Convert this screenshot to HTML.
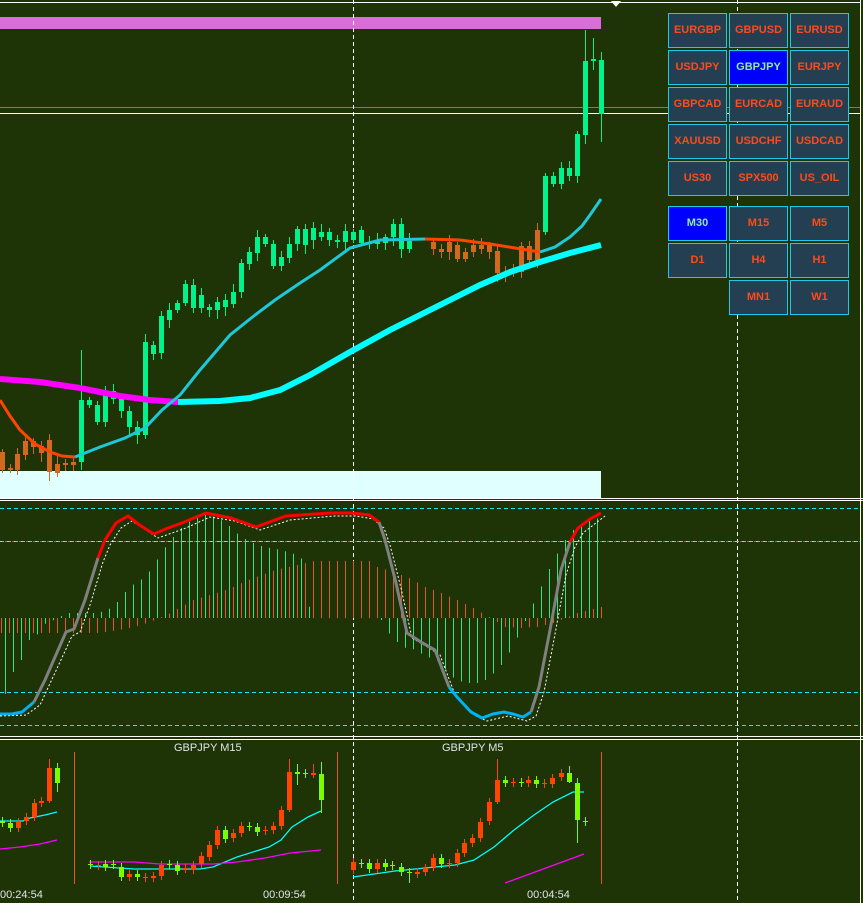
<!DOCTYPE html>
<html><head><meta charset="utf-8">
<style>
html,body{margin:0;padding:0;background:#1e3306;}
body{width:863px;height:903px;overflow:hidden;position:relative;font-family:"Liberation Sans",sans-serif;}
svg{position:absolute;left:0;top:0;}
.btn{position:absolute;width:57px;height:33px;background:#243f52;border:1px solid #1ec8f0;color:#ff4a1a;font-weight:bold;font-size:11px;line-height:33px;text-align:center;}
.sel{background:#0000ff;color:#90ee90;}
.t{position:absolute;color:#dfe6e6;font-size:11px;}
</style></head><body>
<svg id="s" width="863" height="903" xmlns="http://www.w3.org/2000/svg">
<rect width="863" height="903" fill="#1e3306"/>
<line x1="0" y1="2.5" x2="860" y2="2.5" stroke="#fff"/>
<path d="M611 1 L621 1 L616 7 Z" fill="#fff"/>
<rect x="0" y="17" width="601" height="12" fill="#d86fd6"/>
<rect x="0" y="471" width="601" height="27" fill="#e0ffff"/>
<line x1="0" y1="107.5" x2="860" y2="107.5" stroke="#e05a10"/>
<line x1="0" y1="113.5" x2="860" y2="113.5" stroke="#fff"/>
<line x1="353.5" y1="0" x2="353.5" y2="903" stroke="#fff" stroke-dasharray="4,3"/>
<line x1="737.5" y1="0" x2="737.5" y2="903" stroke="#fff" stroke-dasharray="4,3"/>
<line x1="860.5" y1="0" x2="860.5" y2="903" stroke="#fff"/>
<line x1="0" y1="498.5" x2="863" y2="498.5" stroke="#fff"/>
<line x1="0" y1="500.5" x2="863" y2="500.5" stroke="#fff"/>
<line x1="0" y1="736.5" x2="863" y2="736.5" stroke="#fff"/>
<line x1="0" y1="739.5" x2="863" y2="739.5" stroke="#fff"/>
<g stroke="#1ee6f0" stroke-dasharray="4,3">
<line x1="0" y1="508.5" x2="860" y2="508.5"/><line x1="0" y1="541.5" x2="860" y2="541.5"/>
<line x1="0" y1="692.5" x2="860" y2="692.5"/><line x1="0" y1="725.5" x2="860" y2="725.5"/>
</g>
<line x1="0" y1="541.5" x2="860" y2="541.5" stroke="#fff" stroke-dasharray="4,3" stroke-dashoffset="2" opacity="0.35"/>
<g id="hist"></g>
<g id="cand" shape-rendering="crispEdges"></g>
<polyline fill="none" stroke="#ff4500" stroke-width="3" points="0,400 10,416 20,430 35,444 50,452 62,456 75,457"/>
<polyline fill="none" stroke="#ff00ff" stroke-width="6" points="0,379 40,382 80,388 120,396 150,400 178,402"/>
<polyline fill="none" stroke="#00ffff" stroke-width="6" points="178,402 220,401 250,398 280,390 310,375 350,352 390,330 420,315 450,300 480,285 510,272 540,262 570,253 601,245"/>
<polyline fill="none" stroke="#1ec8d8" stroke-width="3" points="75,457 100,447 125,438 145,428 162,410 180,395 200,370 230,335 255,315 275,300 300,283 320,270 350,248 380,240 425,239"/>
<polyline fill="none" stroke="#ff4500" stroke-width="3" points="425,239 460,240 490,244 515,248 540,252"/>
<polyline fill="none" stroke="#1ec8d8" stroke-width="3" points="540,252 555,247 570,237 582,226 590,215 601,199"/>
<polyline fill="none" stroke="#fff" stroke-width="1" stroke-dasharray="2,2" points="0,716 26,715 40,705 60,662 72,636 80,632 90,605 103,562 110,545 121,528 132,521 158,538 186,528 210,517 235,521 260,530 290,520 334,516 356,516 373,519 384,528 390,545 401,588 412,638 426,646 440,655 454,692 462,702 476,716 487,721 508,716 527,721 536,716 544,692 555,634 566,575 575,547 583,533 605,516"/>
<polyline fill="none" stroke="#00b0f0" stroke-width="3" points="0,714 12,714 22,712 34,702"/>
<polyline fill="none" stroke="#808080" stroke-width="3" points="34,702 45,680 55,657 66,632 74,629 85,600 98,558"/>
<polyline fill="none" stroke="#ff0000" stroke-width="3" points="98,558 105,540 116,523 128,516 141,526 154,534 168,528 182,523 206,513 231,518 256,527 286,516 330,513 352,513 369,515 379,522"/>
<polyline fill="none" stroke="#808080" stroke-width="3" points="379,522 385,540 396,583 407,633 421,642 435,650 449,687"/>
<polyline fill="none" stroke="#00b0f0" stroke-width="3" points="449,687 457,697 471,712 482,718 493,714 504,712 513,714 523,717 531,712"/>
<polyline fill="none" stroke="#808080" stroke-width="3" points="531,712 539,687 550,630 561,570 570,542"/>
<polyline fill="none" stroke="#ff0000" stroke-width="3" points="570,542 578,528 590,519 601,513"/>
<g stroke="#e05a10"><line x1="74.5" y1="752" x2="74.5" y2="884"/><line x1="337.5" y1="752" x2="337.5" y2="884"/><line x1="601.5" y1="752" x2="601.5" y2="884"/></g>
<g fill="none" stroke-width="1.3">
<polyline stroke="#00ffff" points="0,821 23,821 30,818 45,815 57,812"/>
<polyline stroke="#ff00ff" points="0,849 20,847 40,844 57,840"/>
<polyline stroke="#00ffff" points="90,866 134,869 200,869 213,867 237,857 269,847 281,840 292,827 308,817 321,811"/>
<polyline stroke="#ff00ff" points="89,862 134,862 160,864 213,864 237,862 265,858 290,853 321,850"/>
<polyline stroke="#00ffff" points="353,877 395,871 435,867 455,865 474,860 494,847 514,830 534,815 553,802 573,792 584,792"/>
<polyline stroke="#ff00ff" points="505,883 584,854"/>
</g>
<g id="mini" shape-rendering="crispEdges"></g>
</svg>
<div class="t" style="left:174px;top:742px;">GBPJPY M15</div>
<div class="t" style="left:442px;top:742px;">GBPJPY M5</div>
<div class="t" style="left:0px;top:889px;">00:24:54</div>
<div class="t" style="left:263px;top:889px;">00:09:54</div>
<div class="t" style="left:527px;top:889px;">00:04:54</div>

<div class="btn" style="left:668px;top:13px">EURGBP</div>
<div class="btn" style="left:729px;top:13px">GBPUSD</div>
<div class="btn" style="left:790px;top:13px">EURUSD</div>
<div class="btn" style="left:668px;top:50px">USDJPY</div>
<div class="btn sel" style="left:729px;top:50px">GBPJPY</div>
<div class="btn" style="left:790px;top:50px">EURJPY</div>
<div class="btn" style="left:668px;top:87px">GBPCAD</div>
<div class="btn" style="left:729px;top:87px">EURCAD</div>
<div class="btn" style="left:790px;top:87px">EURAUD</div>
<div class="btn" style="left:668px;top:124px">XAUUSD</div>
<div class="btn" style="left:729px;top:124px">USDCHF</div>
<div class="btn" style="left:790px;top:124px">USDCAD</div>
<div class="btn" style="left:668px;top:161px">US30</div>
<div class="btn" style="left:729px;top:161px">SPX500</div>
<div class="btn" style="left:790px;top:161px">US_OIL</div>
<div class="btn sel" style="left:668px;top:206px">M30</div>
<div class="btn" style="left:729px;top:206px">M15</div>
<div class="btn" style="left:790px;top:206px">M5</div>
<div class="btn" style="left:668px;top:243px">D1</div>
<div class="btn" style="left:729px;top:243px">H4</div>
<div class="btn" style="left:790px;top:243px">H1</div>
<div class="btn" style="left:729px;top:280px">MN1</div>
<div class="btn" style="left:790px;top:280px">W1</div>

<script>
var NS="http://www.w3.org/2000/svg";
function el(p,t,a){var e=document.createElementNS(NS,t);for(var k in a)e.setAttribute(k,a[k]);p.appendChild(e);return e;}
function interp(keys,x){if(x<=keys[0][0])return keys[0][1];for(var i=1;i<keys.length;i++){if(x<=keys[i][0]){var a=keys[i-1],b=keys[i];return a[1]+(b[1]-a[1])*(x-a[0])/(b[0]-a[0]);}}return keys[keys.length-1][1];}
var h=document.getElementById('hist');
var og=[[2,633],[58,633],[100,633],[130,628],[150,622],[170,613],[193,600],[226,590],[248,580],[275,570],[297,565],[314,561],[369,561],[377,567],[393,572],[409,578],[425,587],[441,593],[457,600],[473,608],[489,617],[505,627],[521,628],[537,627],[553,623],[577,613],[601,607]];
var gg=[[2,707],[10,672],[18,672],[26,640],[34,640],[42,625],[58,618],[66,613],[98,613],[113,607],[121,597],[129,587],[145,577],[153,566],[161,553],[170,540],[177,533],[185,523],[194,520],[201,515],[209,515],[217,518],[226,523],[233,530],[241,537],[249,541],[257,545],[265,547],[281,550],[297,555],[305,562],[310,618],[377,618],[381,620],[385,630],[393,637],[401,647],[417,650],[425,657],[433,658],[441,663],[449,675],[457,680],[465,683],[481,683],[489,677],[497,670],[505,660],[513,645],[521,630],[529,612],[537,595],[545,578],[553,560],[561,547],[569,533],[577,527],[585,523],[593,518],[601,519]];
for(var x=1;x<=601;x+=8){var y=interp(og,x);el(h,'line',{x1:x+.5,x2:x+.5,y1:618,y2:y,stroke:'#e05a10'});}
for(var x=5;x<=601;x+=8){var y=interp(gg,x);if(Math.abs(y-618)>1)el(h,'line',{x1:x+.5,x2:x+.5,y1:618,y2:y,stroke:'#2ae88a'});}
// main candles: x, bodyTop, bodyBot, bull
var C=[[2,452,470,0],[10,468,470,0],[17,454,470,0],[25,441,455,0],[33,441,447,0],[41,446,453,0],[49,440,472,0],[57,464,473,0],[65,463,465,0],[73,462,465,0],
[81,400,462,1],[89,400,405,1],[97,405,422,1],[105,392,422,1],[113,391,399,1],[121,399,411,1],[129,411,427,1],[137,427,435,1],[145,342,435,1],[153,345,354,1],[161,316,353,1],[169,310,320,1],[177,303,310,1],[185,284,303,1],[193,285,308,1],[201,295,308,1],[209,307,310,1],[217,302,310,1],[225,300,307,1],[233,292,304,1],[241,263,292,1],[249,252,264,1],[257,237,253,1],[265,237,244,1],[273,244,266,1],[281,257,266,1],[289,244,258,1],[297,229,244,1],[305,229,245,1],[313,228,240,1],[321,232,237,1],[329,232,240,1],[337,240,242,1],[345,231,242,1],[353,232,240,1],[361,230,243,1],[369,242,244,1],[377,240,244,1],[385,237,243,1],[393,224,237,1],[401,224,249,1],[409,241,249,1],
[433,242,249,0],[441,249,252,0],[449,242,252,0],[457,245,259,0],[465,252,259,0],[473,245,252,0],[481,245,249,0],[489,245,252,0],[497,251,273,0],[505,272,273,0],[513,272,273,0],[521,246,272,0],[529,246,260,0],[537,230,260,0],
[545,176,232,1],[553,176,184,1],[561,168,184,1],[569,168,176,1],[577,134,176,1],[585,61,135,1],[593,59,61,1],[601,60,114,1]];
var cg=document.getElementById('cand');
C.forEach(function(c,i){var col=c[3]?'#00f28c':'#d2691e';var w=(i*7)%11;var t=c[1]-3-w%6,b=c[2]+3+(w*3)%7;if(c[0]==81)t=350;if(c[0]==585)t=30;if(c[0]==593){t=38;b=70;}if(c[0]==601)b=142;
el(cg,'line',{x1:c[0]+.5,x2:c[0]+.5,y1:t,y2:b,stroke:col});var hh=Math.max(c[2]-c[1],1);el(cg,'rect',{x:c[0]-2,y:c[1],width:5,height:hh,fill:col});});
// mini candles: x, top, bot, bull, wickTop, wickBot
var M=[[2,821,823,1],[10,823,828,1],[18,822,828,0],[26,817,821,0],[34,803,817,0],[41,801,803,0],[49,768,801,0,759,803],[57,768,783,1,763,792],
[90,864,865,1],[98,865,866,0],[105,864,867,1],[113,864,865,1],[121,867,877,1],[129,874,877,0],[137,874,877,1],[145,877,878,0],[153,876,878,0],[161,865,876,0],[169,864,865,1],[177,865,871,1],[185,868,869,0],[193,865,870,0],[201,856,864,0],[209,845,857,0],[217,830,845,0],[225,830,839,1],[233,833,838,0],[241,826,833,0],[249,826,827,1],[257,827,832,1],[265,830,831,0],[273,826,830,0],[281,810,826,0],[289,772,810,0,759,812],[297,772,774,1,764,785],[305,773,774,1],[313,773,775,0,764,778],[321,774,800,1,762,813],
[353,862,870,0],[361,863,864,1],[369,863,869,1],[377,863,869,0],[385,863,867,1],[392,865,866,1],[401,867,872,1],[409,872,873,1,868,883],[417,872,874,0],[425,868,872,0],[433,858,867,0],[441,858,864,1],[449,863,864,0],[457,853,863,0],[464,843,853,0],[472,838,843,0],[480,822,838,0],[489,802,821,0],[497,780,802,0,759,804],[505,780,783,1],[513,782,783,0],[521,782,783,1],[528,780,783,0],[536,780,784,1],[544,783,784,0],[552,778,784,0],[561,773,777,0],[569,773,782,1,766,783],[577,783,820,1,778,843],[585,821,822,1]];
var mg=document.getElementById('mini');
M.forEach(function(c){var col=c[3]?'#7cfc00':'#ff4500';var t=c[4]||c[1]-4,b=c[5]||c[2]+4;
el(mg,'line',{x1:c[0]+.5,x2:c[0]+.5,y1:t,y2:b,stroke:col});el(mg,'rect',{x:c[0]-2,y:c[1],width:5,height:Math.max(c[2]-c[1],1),fill:col});});
</script>
</body></html>
